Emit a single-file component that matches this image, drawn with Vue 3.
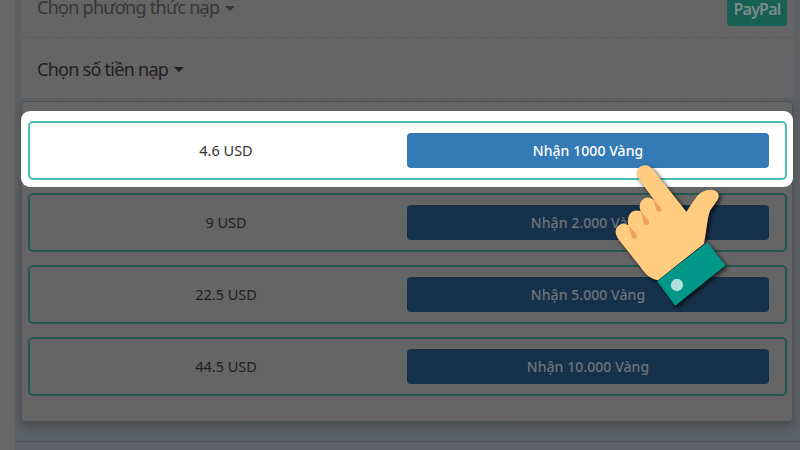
<script setup>
const offers = [
  { price: '4.6 USD', reward: 'Nhận 1000 Vàng', active: true },
  { price: '9 USD', reward: 'Nhận 2.000 Vàng' },
  { price: '22.5 USD', reward: 'Nhận 5.000 Vàng' },
  { price: '44.5 USD', reward: 'Nhận 10.000 Vàng' },
]
</script>

<template>
  <main class="page">
    <section class="panel">
      <div class="form">
        <div class="field method">
          <span class="label">Chọn phương thức nạp<i class="caret"></i></span>
          <span class="paypal">PayPal</span>
        </div>
        <div class="field amount">
          <span class="label">Chọn số tiền nạp<i class="caret"></i></span>
        </div>
        <div class="menu">
          <div v-for="offer in offers" :key="offer.price" class="slot" :class="{ active: offer.active }">
            <div class="offer">
              <span class="price">{{ offer.price }}</span>
              <button class="buy">{{ offer.reward }}</button>
            </div>
          </div>
        </div>
      </div>
      <div class="footer"></div>
    </section>
    <svg class="hand" viewBox="0 0 450 495" aria-hidden="true">
      <path fill="#ffcc80" d="M174 391C160 388 148 382 137 371L54 266C43 249 45 232 58 225C67 219 77 220 85 226C81 208 85 193 96 185C106 180 115 181 122 184C116 169 119 155 130 147C142 139 152 142 162 150L117 88C107 72 110 55 124 48C138 42 151 48 161 61L259 185L289 141C301 126 320 117 338 120C355 123 361 136 352 151L331 181C322 202 321 235 312 281Z" />
      <g fill="#f0a062">
        <path d="M160 147L183 174C188 182 181 188 173 184C164 177 166 160 160 147Z" />
        <path d="M122 183L145 211C152 220 143 229 135 224C127 217 128 199 122 183Z" />
        <path d="M83 224L108 251C115 259 108 268 101 266C91 259 92 239 83 224Z" />
      </g>
      <path fill="#009688" d="M171 394L322 277L377 346L226 467Z" />
      <circle cx="231" cy="405" r="18.5" fill="#b2dfdb" />
    </svg>
  </main>
</template>

<style>
body { margin: 0; }
</style>

<style scoped>
.page {
  position: relative;
  box-sizing: border-box;
  width: 800px;
  height: 450px;
  overflow: hidden;
  padding-left: 15px;
  background: #676767;
  font-family: "Noto Sans", "Open Sans", sans-serif;
  color: #202020;
}
.panel {
  height: 450px;
  box-sizing: border-box;
  padding: 0 7px 0 6px;
  background: linear-gradient(#5e6164, #5c6165);
}
.form { height: 441px; }
.field {
  box-sizing: border-box;
  display: flex;
  justify-content: space-between;
  border-bottom: 1px dashed #595959;
  background: #656565;
  padding: 0 6px 0 16px;
}
.method { height: 38px; color: #363638; }
.amount { height: 61px; align-items: center; }
.label {
  display: flex;
  align-items: center;
  height: 24px;
  font-size: 18px;
  line-height: 24px;
  letter-spacing: -0.73px;
  white-space: nowrap;
}
.method .label { margin-top: -5px; }
.amount .label { margin-top: 1px; }
.caret {
  margin: 1px 0 0 6px;
  border: 5px solid transparent;
  border-top-color: currentColor;
  border-bottom: 0;
}
.method .caret { margin-top: 3px; }
.paypal {
  box-sizing: border-box;
  width: 60px;
  height: 34px;
  margin-top: -8px;
  border-radius: 4px;
  background: #185f54;
  color: #7e8c89;
  font-size: 16px;
  font-weight: 600;
  line-height: 34px;
  letter-spacing: -0.8px;
  text-align: center;
}
.menu {
  box-sizing: border-box;
  width: 772px;
  height: 321px;
  margin-top: 2px;
  padding-top: 9px;
  border: 1px solid #505254;
  border-radius: 4px;
  background: #656565;
  box-shadow: 0 5px 10px rgba(0, 0, 0, 0.2);
}
.slot { padding: 6px 5px 7px 6px; }
.slot.active {
  height: 76px;
  box-sizing: border-box;
  margin: 0 -1px;
  padding: 10px 6px 7px 7px;
  border-radius: 9px;
  background: #fff;
}
.offer {
  box-sizing: border-box;
  display: grid;
  grid-template-columns: 362px 362px;
  align-items: center;
  height: 59px;
  padding-left: 15px;
  border: 2px solid #22584e;
  border-radius: 5px;
}
.active .offer { border-color: #45bfb0; }
.price {
  padding-bottom: 2px;
  font-size: 14.5px;
  line-height: 20px;
  text-align: center;
}
.active .price { color: #333; }
.buy {
  height: 35px;
  padding: 0;
  border: 0;
  border-radius: 4px;
  background: #16324b;
  color: #6d767e;
  font: 500 14px/35px "Noto Sans", sans-serif;
  letter-spacing: 0.07px;
}
.active .buy { background: #337ab7; color: #fff; }
.footer {
  height: 9px;
  margin: 0 -7px 0 -6px;
  box-sizing: border-box;
  border-top: 1px solid #4c5155;
  background: #5e6267;
}
.hand {
  position: absolute;
  left: 600px;
  top: 150px;
  width: 150px;
  height: 165px;
  overflow: visible;
  filter: drop-shadow(2px 2px 2px rgba(0, 0, 0, 0.75));
}
</style>
